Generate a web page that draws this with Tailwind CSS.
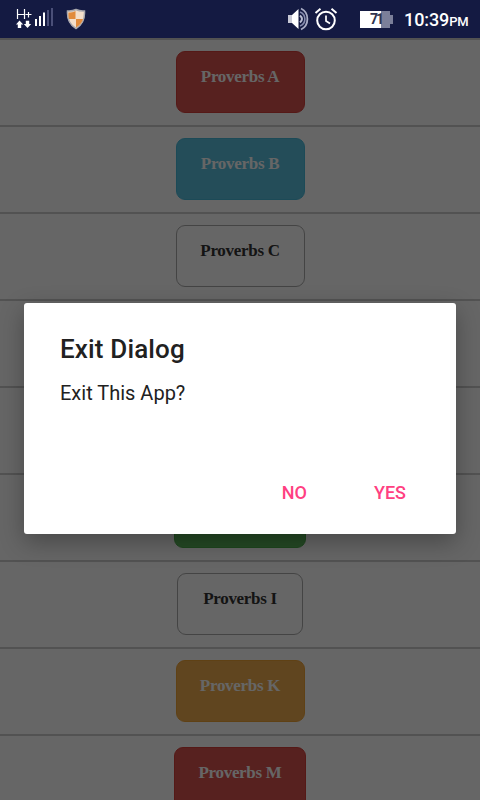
<!DOCTYPE html>
<html lang="en">
<head>
  <meta charset="UTF-8" />
  <meta name="viewport" content="width=device-width, initial-scale=1.0"/>
  <title>Proverbs</title>
  <script src="https://cdn.jsdelivr.net/npm/@tailwindcss/browser@4"></script>
</head>
<body class="relative h-[800px] w-[480px] overflow-hidden bg-white font-['Roboto',sans-serif]">

<!-- Status bar -->
<header class="relative z-10 flex h-[38px] items-center bg-[#141a42] text-white">
  <svg class="ml-4 h-[38px] w-[38px] shrink-0" viewBox="0 0 38 38" fill="none">
    <path d="M1.500 9v10M8.500 9v10M1.500 14.500h7M9.500 14.500h6M12.500 12v5.500" stroke="#fff" stroke-width="1.200"/>
    <path d="M3.500 20.500L7.200 24.500H5.200V28H1.800v-3.500H0zM11.500 28L7.800 24h2v-3.300h3.400V24h2z" fill="#fff"/>
    <path d="M20 19v7M24 16v10M28 12.500v13.500" stroke="#fff" stroke-width="2"/>
    <path d="M32 10v16M36 8v18" stroke="#4a4f78" stroke-width="2"/>
  </svg>
  <svg class="ml-3 h-[22px] w-5 shrink-0" viewBox="0 0 20 22">
    <path d="M10 1.500C13 3 16 3.200 18.500 3c.5 8-1.500 13.500-8.500 17.500C3 16.500 1 11 1.500 3 4 3.200 7 3 10 1.500z" fill="#f4dfcb" stroke="#aaa9ae" stroke-width="1.500"/>
    <path d="M9.500 3v8H3C2.500 9 2.300 7 2.500 4.500 5 4.500 7.500 4 9.500 3zM10 11h7c-1 3.500-3.300 6.500-7 8.500z" fill="#e18b3d"/>
  </svg>
  <svg class="ml-auto h-6 w-[22px] shrink-0" viewBox="0 0 22 24" fill="none">
    <path d="M0 8h4l6.500-6v20L4 16H0z" fill="#fff"/>
    <path d="M0 8h4v8H0z" fill="#c8c9d5"/>
    <path d="M12 8.500q4 3.500 0 7" stroke="#b9bdd2" stroke-width="2"/>
    <path d="M12 5c6.500 2.500 6.500 11.500 0 14" stroke="#858bad" stroke-width="1.600"/>
    <path d="M13 1.500c8.500 4 8.500 17 0 21" stroke="#a9adc5" stroke-width="1.800"/>
  </svg>
  <svg class="ml-1 h-6 w-6 shrink-0" viewBox="0 0 24 24" fill="none" stroke="#fff">
    <circle cx="12" cy="13.500" r="8.800" stroke-width="2"/>
    <path d="M12 8.500V14l4 2.500" stroke-width="1.700"/>
    <path d="M1.500 6l5-4.200M22.500 6l-5-4.200" stroke-width="2"/>
  </svg>
  <div class="ml-[22px] flex h-[17px] w-[33px] shrink-0 items-center">
    <div class="flex h-[17px] w-[30px] items-center justify-center bg-linear-to-r from-white from-70% to-[#7b7f99] to-70% pl-0.5 text-[14px] font-bold tracking-[-2px] text-[#30344f]">71</div>
    <div class="h-[9px] w-[3px] bg-[#7b7f99]"></div>
  </div>
  <div class="mr-3 ml-[11px] flex w-[64px] items-baseline whitespace-nowrap pt-0.5 text-[18px] font-medium leading-none tracking-[-0.1px]"><span>10:39</span><span class="text-[13px]">PM</span></div>
</header>

<!-- Proverb list -->
<main class="flex flex-col border-t-2 border-[#ccc] font-['Liberation_Serif',serif] text-[17px] font-bold leading-5 tracking-[-0.3px]">
  <div class="flex h-[87px] shrink-0 justify-center border-b-2 border-[#ccc] pt-[11px]">
    <div class="h-[62px] w-[129px] rounded-[9px] border border-[#d43f3a] bg-[#d9534f] pt-[15px] text-center text-white">Proverbs A</div>
  </div>
  <div class="flex h-[87px] shrink-0 justify-center border-b-2 border-[#ccc] pt-[11px]">
    <div class="h-[62px] w-[129px] rounded-[9px] border border-[#46b8da] bg-[#5bc0de] pt-[15px] text-center text-white">Proverbs B</div>
  </div>
  <div class="flex h-[87px] shrink-0 justify-center border-b-2 border-[#ccc] pt-[11px]">
    <div class="h-[62px] w-[129px] rounded-[9px] border border-[#aaa] bg-white pt-[15px] text-center text-[#333]">Proverbs C</div>
  </div>
  <div class="flex h-[87px] shrink-0 justify-center border-b-2 border-[#ccc] pt-[11px]">
    <div class="h-[62px] w-[129px] rounded-[9px] border border-[#eea236] bg-[#f0ad4e] pt-[15px] text-center text-white">Proverbs D</div>
  </div>
  <div class="flex h-[87px] shrink-0 justify-center border-b-2 border-[#ccc] pt-[11px]">
    <div class="h-[62px] w-[129px] rounded-[9px] border border-[#2e6da4] bg-[#337ab7] pt-[15px] text-center text-white">Proverbs E</div>
  </div>
  <div class="flex h-[87px] shrink-0 justify-center border-b-2 border-[#ccc] pt-[11px]">
    <div class="h-[62px] w-[132px] rounded-[9px] border border-[#4cae4c] bg-[#5cb85c] pt-[15px] text-center text-white">Proverbs H</div>
  </div>
  <div class="flex h-[87px] shrink-0 justify-center border-b-2 border-[#ccc] pt-[11px]">
    <div class="h-[62px] w-[126px] rounded-[9px] border border-[#aaa] bg-white pt-[15px] text-center text-[#333]">Proverbs I</div>
  </div>
  <div class="flex h-[87px] shrink-0 justify-center border-b-2 border-[#ccc] pt-[11px]">
    <div class="h-[62px] w-[129px] rounded-[9px] border border-[#eea236] bg-[#f0ad4e] pt-[15px] text-center text-white">Proverbs K</div>
  </div>
  <div class="flex h-[87px] shrink-0 justify-center border-b-2 border-[#ccc] pt-[11px]">
    <div class="h-[62px] w-[132px] rounded-[9px] border border-[#d43f3a] bg-[#d9534f] pt-[15px] text-center text-white">Proverbs M</div>
  </div>
</main>

<!-- Exit dialog -->
<div class="absolute inset-x-0 top-[38px] bottom-0 bg-black/60 px-6 pt-[265px]">
  <div class="flex h-[231px] flex-col rounded-[3px] bg-white px-9 pt-[30px] text-[#212121] shadow-[0_8px_24px_rgba(0,0,0,0.3)]">
    <h2 class="text-[26px] font-medium leading-8 tracking-[0.15px]">Exit Dialog</h2>
    <p class="mt-[15px] text-[20px] leading-[26px]">Exit This App?</p>
    <div class="mt-auto mb-[29px] flex justify-end gap-[67px] pr-[14px] text-[18px] font-medium leading-6 text-[#ff4081]">
      <button>NO</button>
      <button>YES</button>
    </div>
  </div>
</div>

</body>
</html>
